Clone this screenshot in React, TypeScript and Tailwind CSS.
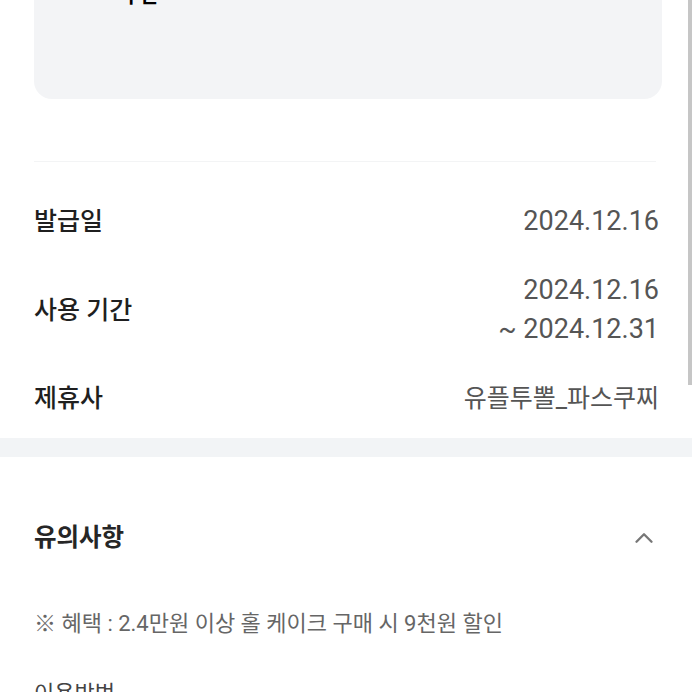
import { ChevronUp } from 'lucide-react';

const font = "font-['Roboto','Noto_Sans_CJK_KR',sans-serif]";

type Row = { label: string; values: string[]; korean?: boolean };

const rows: Row[] = [
  { label: '발급일', values: ['2024.12.16'] },
  { label: '사용 기간', values: ['2024.12.16', '~ 2024.12.31'] },
  { label: '제휴사', values: ['유플투뽈_파스쿠찌'], korean: true },
];

export default function App() {
  return (
    <div className={`relative h-[692px] w-[692px] overflow-hidden bg-white ${font}`}>
      {/* coupon card, top is scrolled out of view */}
      <div className="px-[34px]">
        <div className="-mt-[101px] h-[200px] w-[628px] rounded-[18px] bg-[#f3f4f6] pl-[88px] pt-[87px]">
          <p className="text-[20px] font-bold leading-[20px] text-black">쿠폰</p>
        </div>
      </div>

      <div className="pl-[34px] pr-[33px]">
        <div className="mt-[62px] h-px w-[622px] bg-[#f3f4f5]" />

        <div className="flex flex-col gap-[30px] pb-[20px] pt-[40px]">
          {rows.map((row) => (
            <div key={row.label} className="flex items-center justify-between">
              <span className="text-[25px] font-medium leading-[39px] text-[#1f1f1f]">{row.label}</span>
              <div className="flex flex-col items-end">
                {row.values.map((v) => (
                  <span
                    key={v}
                    className={`leading-[39px] text-[#555] ${row.korean ? 'text-[25px]' : 'text-[27px]'}`}
                  >
                    {v}
                  </span>
                ))}
              </div>
            </div>
          ))}
        </div>
      </div>

      <div className="h-[19px] bg-[#f2f4f6]" />

      <div className="px-[34px] pt-[66px]">
        <div className="flex items-center justify-between">
          <h2 className="text-[24.5px] font-bold leading-[30px] text-[#262626]">유의사항</h2>
          <ChevronUp className="-mr-[1px] h-[30px] w-[30px] text-[#777]" strokeWidth={1.9} />
        </div>

        <p className="mt-[56px] text-[22px] leading-[30px] text-[#666]">
          ※ 혜택 : 2.4만원 이상 홀 케이크 구매 시 9천원 할인
        </p>

        <p className="mt-[40px] text-[22px] leading-[30px] text-[#444]">이용방법</p>
      </div>

      {/* scrollbar */}
      <div className="absolute right-0 top-0 h-[385px] w-[4px] bg-[#c6c6c6]" />
    </div>
  );
}
